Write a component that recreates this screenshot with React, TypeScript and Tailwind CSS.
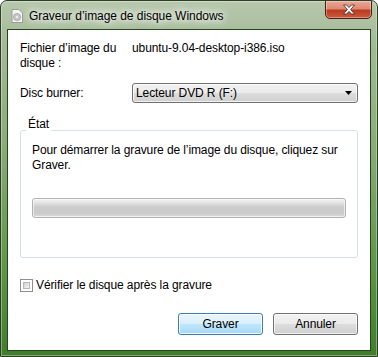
import React from "react";

const font = "font-['Liberation_Sans',Arial,sans-serif]";

export default function App() {
  return (
    <div
      className={`relative w-[378px] h-[357px] overflow-hidden rounded-t-[7px] border border-[#2b3f24] bg-[linear-gradient(180deg,#b7c8ad_0%,#a4ba97_12%,#8bab79_40%,#5f9548_75%,#3f7d2b_100%)] shadow-[inset_0_0_0_1px_rgba(255,255,255,0.35)] ${font} text-[12px] text-black`}
    >
      {/* title bar */}
      <div className="flex h-[28px] items-center pl-[10px]">
        <svg width="12" height="14" viewBox="0 0 12 14" className="mt-[2px]">
          <path d="M1 0.5h7l3.5 3.5v9.5h-10.5z" fill="#f4f4f4" stroke="#9a9a9a" />
          <circle cx="6" cy="8" r="3.6" fill="#c9c9c9" stroke="#8a8a8a" strokeWidth="0.6" />
          <circle cx="6" cy="8" r="1" fill="#f4f4f4" />
        </svg>
        <span className="ml-[6px] mt-[2px] leading-[15px] tracking-[-0.05px] [text-shadow:0_0_6px_#fff,0_0_10px_#fff,0_0_14px_rgba(255,255,255,0.8)]">
          Graveur d’image de disque Windows
        </span>
      </div>

      {/* close button */}
      <div className="absolute right-[5px] top-[-1px] flex h-[19px] w-[47px] items-center justify-center rounded-b-[5px] border border-[#4a1e14] bg-[linear-gradient(180deg,#eaa797_0%,#de8a74_45%,#bc3b20_55%,#cc5a3c_100%)] shadow-[inset_0_0_0_1px_rgba(255,255,255,0.35)]">
        <svg width="14" height="11" viewBox="0 0 14 11">
          <path
            d="M1.5 1h3.2l2.3 2.6 2.3-2.6h3.2l-3.9 4.5 3.9 4.5h-3.2l-2.3-2.6-2.3 2.6h-3.2l3.9-4.5z"
            fill="#fff"
            stroke="#3b2a26"
            strokeWidth="0.8"
          />
        </svg>
      </div>

      {/* client area */}
      <div className="mx-[6px] h-[322px] border border-[#23461a] bg-white px-[12px] pt-[11px] tracking-[-0.1px]">
        <div className="grid grid-cols-[112px_1fr] leading-[15px]">
          <div>
            Fichier d’image du
            <br />
            disque :
          </div>
          <div>ubuntu-9.04-desktop-i386.iso</div>
        </div>

        <div className="mt-[12px] grid grid-cols-[112px_1fr] items-center">
          <div className="leading-[15px]">Disc burner:</div>
          <div className="flex h-[20px] items-center justify-between rounded-[3px] border border-[#707070] bg-[linear-gradient(180deg,#f2f2f2_0%,#ebebeb_48%,#dddddd_52%,#cfcfcf_100%)] pl-[3px] pr-[5px] shadow-[inset_0_0_0_1px_rgba(255,255,255,0.7)]">
            <span className="leading-[15px]">Lecteur DVD R (F:)</span>
            <svg width="7" height="4" viewBox="0 0 7 4">
              <path d="M0 0h7l-3.5 4z" fill="#000" />
            </svg>
          </div>
        </div>

        <div className="relative mt-[27px] h-[128px] rounded-[3px] border border-[#d5dfe5] px-[11px] pt-[12px]">
          <div className="absolute left-[5px] top-[-14px] bg-white px-[2px] leading-[15px]">État</div>
          <div className="whitespace-nowrap leading-[15px]">
            Pour démarrer la gravure de l’image du disque, cliquez sur
            <br />
            Graver.
          </div>
          <div className="mt-[25px] h-[20px] rounded-[3px] border border-[#b2b2b2] bg-[linear-gradient(180deg,#f3f3f3_0%,#e4e4e4_20%,#cbcbcb_45%,#cbcbcb_80%,#dcdcdc_100%)] shadow-[inset_0_0_0_1px_rgba(255,255,255,0.6)]" />
        </div>

        <div className="mt-[20px] flex items-center">
          <div className="h-[13px] w-[13px] border border-[#8f8f8f] bg-white p-[2px]">
            <div className="h-full w-full border border-[#b8b8b8] bg-[linear-gradient(135deg,#cfcfcf_0%,#f4f4f4_100%)]" />
          </div>
          <span className="ml-[3px] leading-[15px]">Vérifier le disque après la gravure</span>
        </div>

        <div className="mt-[20px] flex justify-end gap-[10px]">
          <div className="flex h-[22px] w-[85px] items-center justify-center rounded-[3px] border border-[#3c7fb1] bg-[linear-gradient(180deg,#eaf6fd_0%,#d9f0fc_48%,#bee6fd_52%,#a7d9f5_100%)] shadow-[inset_0_0_0_1px_rgba(255,255,255,0.8)]">
            Graver
          </div>
          <div className="flex h-[22px] w-[85px] items-center justify-center rounded-[3px] border border-[#707070] bg-[linear-gradient(180deg,#f2f2f2_0%,#ebebeb_48%,#dddddd_52%,#cfcfcf_100%)] shadow-[inset_0_0_0_1px_rgba(255,255,255,0.7)]">
            Annuler
          </div>
        </div>
      </div>
    </div>
  );
}
